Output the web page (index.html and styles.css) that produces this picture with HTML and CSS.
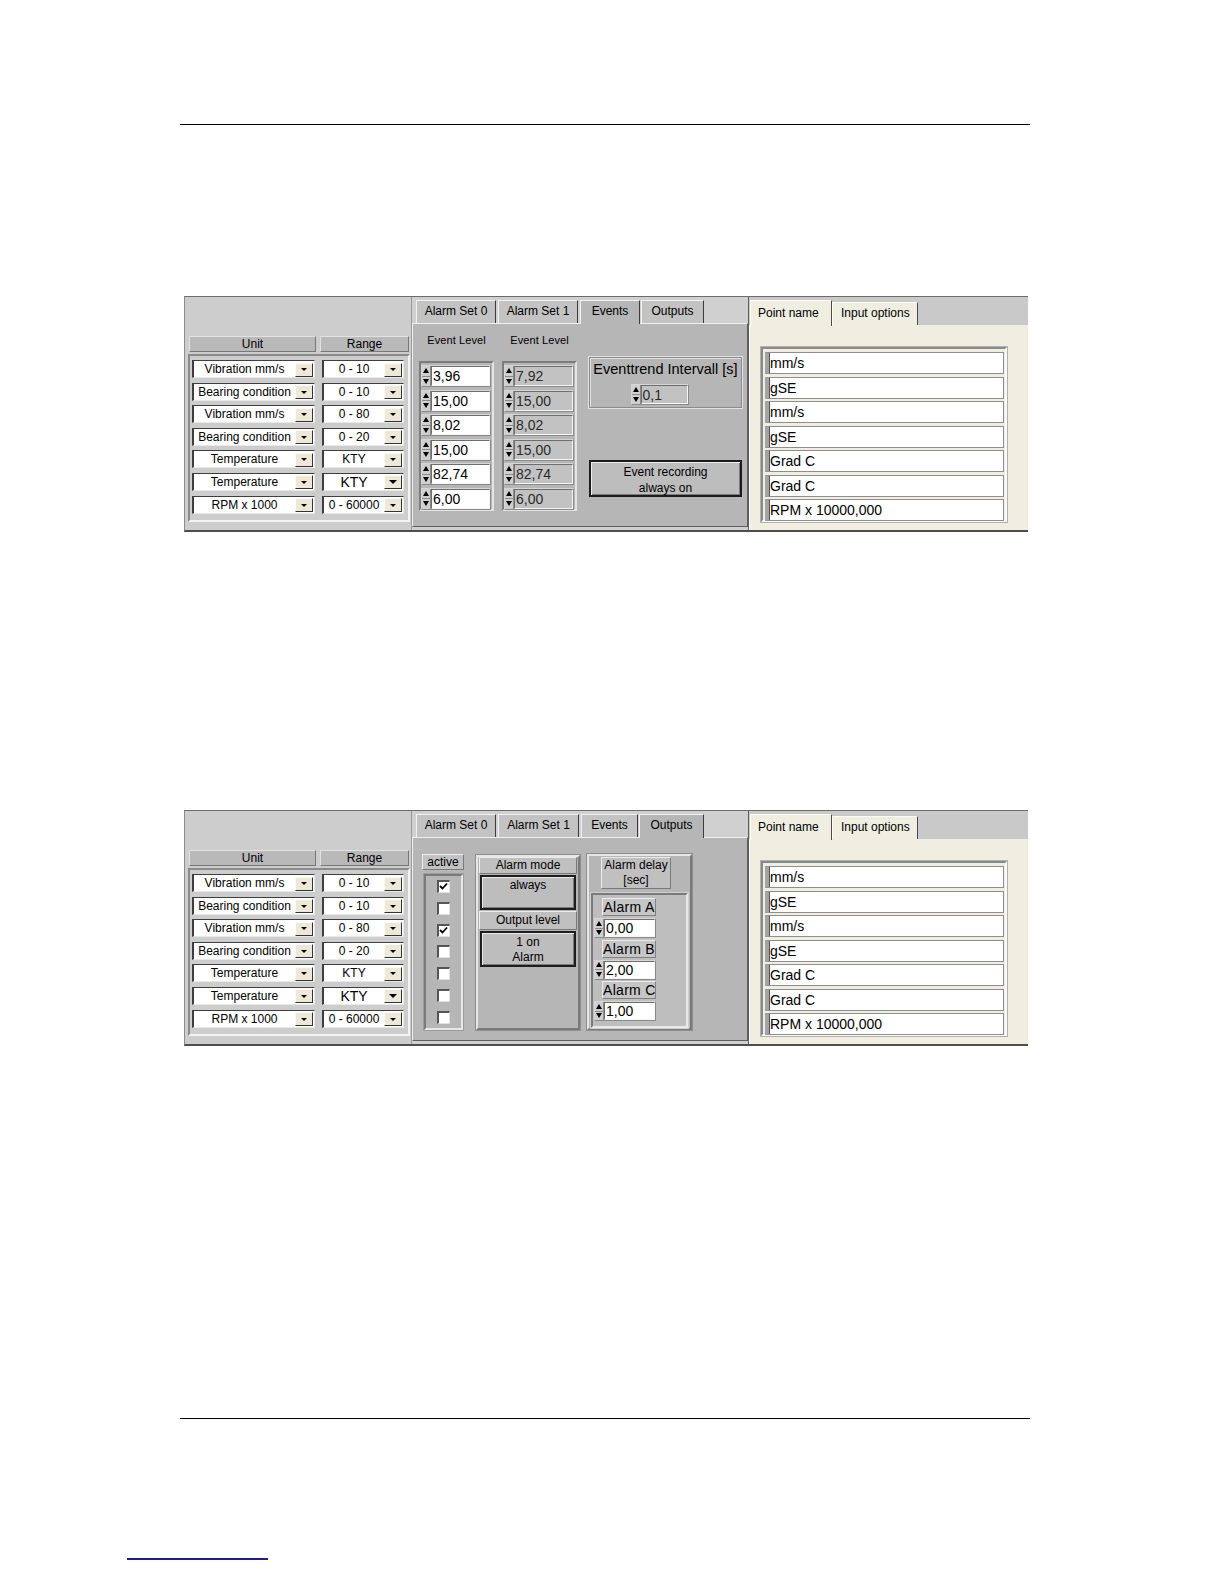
FILE: index.html
```html
<!DOCTYPE html>
<html>
<head>
<meta charset="utf-8">
<link rel="stylesheet" href="styles.css">
</head>
<body>
<div class="page">
  <div class="rule"></div>

  <!-- PANEL 1 : Events -->
  <div class="panel p1">
    <div class="left">
      <div class="hdrs"><div class="hdr unit">Unit</div><div class="hdr range">Range</div></div>
      <div class="grid">
        <div class="row"><div class="dd u"><span class="txt">Vibration mm/s</span><span class="btn"><i></i></span></div><div class="dd r"><span class="txt">0 - 10</span><span class="btn"><i></i></span></div></div>
        <div class="row"><div class="dd u"><span class="txt">Bearing condition</span><span class="btn"><i></i></span></div><div class="dd r"><span class="txt">0 - 10</span><span class="btn"><i></i></span></div></div>
        <div class="row"><div class="dd u"><span class="txt">Vibration mm/s</span><span class="btn"><i></i></span></div><div class="dd r"><span class="txt">0 - 80</span><span class="btn"><i></i></span></div></div>
        <div class="row"><div class="dd u"><span class="txt">Bearing condition</span><span class="btn"><i></i></span></div><div class="dd r"><span class="txt">0 - 20</span><span class="btn"><i></i></span></div></div>
        <div class="row"><div class="dd u"><span class="txt">Temperature</span><span class="btn"><i></i></span></div><div class="dd r"><span class="txt">KTY</span><span class="btn"><i></i></span></div></div>
        <div class="row"><div class="dd u"><span class="txt">Temperature</span><span class="btn"><i></i></span></div><div class="dd r big"><span class="txt">KTY</span><span class="btn"><i></i></span></div></div>
        <div class="row"><div class="dd u"><span class="txt">RPM x 1000</span><span class="btn"><i></i></span></div><div class="dd r"><span class="txt">0 - 60000</span><span class="btn"><i></i></span></div></div>
      </div>
    </div>

    <div class="mid">
      <div class="tabs">
        <div class="tab t1">Alarm Set 0</div>
        <div class="tab t2">Alarm Set 1</div>
        <div class="tab t3 active">Events</div>
        <div class="tab t4">Outputs</div>
      </div>
      <div class="content ev">
        <div class="evcol">
          <div class="evlbl">Event Level</div>
          <div class="spinbox">
            <div class="spin"><span class="sp"><i class="up"></i><i class="dn"></i></span><span class="in">3,96</span></div>
            <div class="spin"><span class="sp"><i class="up"></i><i class="dn"></i></span><span class="in">15,00</span></div>
            <div class="spin"><span class="sp"><i class="up"></i><i class="dn"></i></span><span class="in">8,02</span></div>
            <div class="spin"><span class="sp"><i class="up"></i><i class="dn"></i></span><span class="in">15,00</span></div>
            <div class="spin"><span class="sp"><i class="up"></i><i class="dn"></i></span><span class="in">82,74</span></div>
            <div class="spin"><span class="sp"><i class="up"></i><i class="dn"></i></span><span class="in">6,00</span></div>
          </div>
        </div>
        <div class="evcol">
          <div class="evlbl">Event Level</div>
          <div class="spinbox">
            <div class="spin"><span class="sp"><i class="up"></i><i class="dn"></i></span><span class="in dis">7,92</span></div>
            <div class="spin"><span class="sp"><i class="up"></i><i class="dn"></i></span><span class="in dis">15,00</span></div>
            <div class="spin"><span class="sp"><i class="up"></i><i class="dn"></i></span><span class="in dis">8,02</span></div>
            <div class="spin"><span class="sp"><i class="up"></i><i class="dn"></i></span><span class="in dis">15,00</span></div>
            <div class="spin"><span class="sp"><i class="up"></i><i class="dn"></i></span><span class="in dis">82,74</span></div>
            <div class="spin"><span class="sp"><i class="up"></i><i class="dn"></i></span><span class="in dis">6,00</span></div>
          </div>
        </div>
        <div class="evright">
          <div class="trend">
            <div class="trendlbl">Eventtrend Intervall [s]</div>
            <div class="spin small"><span class="sp"><i class="up"></i><i class="dn"></i></span><span class="in dis">0,1</span></div>
          </div>
          <div class="bigbtn">Event recording<br>always on</div>
        </div>
      </div>
    </div>

    <div class="right">
      <div class="rtabs">
        <div class="rtab active w1">Point name</div>
        <div class="rtab w2">Input options</div>
      </div>
      <div class="rcontent">
        <div class="namebox">
          <div class="name">mm/s</div>
          <div class="name">gSE</div>
          <div class="name">mm/s</div>
          <div class="name">gSE</div>
          <div class="name">Grad C</div>
          <div class="name">Grad C</div>
          <div class="name">RPM x 10000,000</div>
        </div>
      </div>
    </div>
  </div>

  <!-- PANEL 2 : Outputs -->
  <div class="panel p2">
    <div class="left">
      <div class="hdrs"><div class="hdr unit">Unit</div><div class="hdr range">Range</div></div>
      <div class="grid">
        <div class="row"><div class="dd u"><span class="txt">Vibration mm/s</span><span class="btn"><i></i></span></div><div class="dd r"><span class="txt">0 - 10</span><span class="btn"><i></i></span></div></div>
        <div class="row"><div class="dd u"><span class="txt">Bearing condition</span><span class="btn"><i></i></span></div><div class="dd r"><span class="txt">0 - 10</span><span class="btn"><i></i></span></div></div>
        <div class="row"><div class="dd u"><span class="txt">Vibration mm/s</span><span class="btn"><i></i></span></div><div class="dd r"><span class="txt">0 - 80</span><span class="btn"><i></i></span></div></div>
        <div class="row"><div class="dd u"><span class="txt">Bearing condition</span><span class="btn"><i></i></span></div><div class="dd r"><span class="txt">0 - 20</span><span class="btn"><i></i></span></div></div>
        <div class="row"><div class="dd u"><span class="txt">Temperature</span><span class="btn"><i></i></span></div><div class="dd r"><span class="txt">KTY</span><span class="btn"><i></i></span></div></div>
        <div class="row"><div class="dd u"><span class="txt">Temperature</span><span class="btn"><i></i></span></div><div class="dd r big"><span class="txt">KTY</span><span class="btn"><i></i></span></div></div>
        <div class="row"><div class="dd u"><span class="txt">RPM x 1000</span><span class="btn"><i></i></span></div><div class="dd r"><span class="txt">0 - 60000</span><span class="btn"><i></i></span></div></div>
      </div>
    </div>

    <div class="mid">
      <div class="tabs">
        <div class="tab t1">Alarm Set 0</div>
        <div class="tab t2b">Alarm Set 1</div>
        <div class="tab t3b">Events</div>
        <div class="tab t4b active">Outputs</div>
      </div>
      <div class="content out">
        <div class="actcol">
          <div class="acthdr">active</div>
          <div class="actbox">
            <span class="cb"><svg viewBox="0 0 11 11" width="11" height="11"><path d="M2 5 L4.5 7.5 L9 2.5" fill="none" stroke="#000" stroke-width="1.8"/></svg></span>
            <span class="cb"></span>
            <span class="cb"><svg viewBox="0 0 11 11" width="11" height="11"><path d="M2 5 L4.5 7.5 L9 2.5" fill="none" stroke="#000" stroke-width="1.8"/></svg></span>
            <span class="cb"></span>
            <span class="cb"></span>
            <span class="cb"></span>
            <span class="cb"></span>
          </div>
        </div>
        <div class="grp mode">
          <div class="ghdr h1">Alarm mode</div>
          <div class="gbtn b1">always</div>
          <div class="ghdr h2">Output level</div>
          <div class="gbtn b2">1 on<br>Alarm</div>
        </div>
        <div class="grp delay">
          <div class="dhdr">Alarm delay<br>[sec]</div>
          <div class="dbox">
            <div class="ditem"><div class="dlbl">Alarm A</div><div class="spin dspin"><span class="sp"><i class="up"></i><i class="dn"></i></span><span class="in">0,00</span></div></div>
            <div class="ditem"><div class="dlbl">Alarm B</div><div class="spin dspin"><span class="sp"><i class="up"></i><i class="dn"></i></span><span class="in">2,00</span></div></div>
            <div class="ditem"><div class="dlbl">Alarm C</div><div class="spin dspin"><span class="sp"><i class="up"></i><i class="dn"></i></span><span class="in">1,00</span></div></div>
          </div>
        </div>
      </div>
    </div>

    <div class="right">
      <div class="rtabs">
        <div class="rtab active w1b">Point name</div>
        <div class="rtab w2">Input options</div>
      </div>
      <div class="rcontent">
        <div class="namebox">
          <div class="name">mm/s</div>
          <div class="name">gSE</div>
          <div class="name">mm/s</div>
          <div class="name">gSE</div>
          <div class="name">Grad C</div>
          <div class="name">Grad C</div>
          <div class="name">RPM x 10000,000</div>
        </div>
      </div>
    </div>
  </div>

  <div class="rule bottom"></div>
  <div class="footline"></div>
</div>
</body>
</html>
```
FILE: styles.css
```css
* { box-sizing: border-box; }
html, body { margin: 0; padding: 0; width: 1224px; height: 1584px; overflow: hidden; }
body { background: #fff; font-family: "Liberation Sans", Arial, sans-serif; color: #000; }
.page { width: 1224px; height: 1584px; padding-top: 124px; overflow: hidden; }

.rule { margin-left: 180px; width: 850px; height: 0; border-top: 1px solid #000; }
.rule.bottom { margin-top: 372px; }
.footline { margin-top: 139px; margin-left: 127px; width: 141px; border-top: 2px solid #1d1d8c; }

/* ---------- panel ---------- */
.panel {
  margin-left: 184px; width: 844px; height: 236px; display: flex;
  background: #c9c9c9; border-top: 1px solid #6c6c6c; border-left: 1px solid #8c8c8c; border-bottom: 2px solid #4e4e4e;
}
.p1 { margin-top: 171px; }
.p2 { margin-top: 278px; }

/* ---------- left ---------- */
.left { width: 227px; flex: none; background: #cdcdcd; padding: 39px 0 0 4px; border-right: 1px solid #9a9a9a; }
.hdrs { display: flex; gap: 4px; height: 16px; }
.hdr {
  background: #b9b9b9; border: 1px solid; border-color: #e2e2e2 #777 #777 #e2e2e2;
  font-size: 12px; line-height: 14px; text-align: center;
}
.hdr.unit { width: 127px; }
.hdr.range { width: 89px; }
.grid {
  margin: 2px 0 0 -1px; width: 222px; height: 168px;
  border: 2px solid; border-color: #8a8a8a #f2f2f2 #f2f2f2 #8a8a8a;
  padding: 4px 2px; display: flex; flex-direction: column; gap: 4.6px;
}
.row { display: flex; gap: 7px; height: 18px; }
.dd {
  height: 18px; background: #fff; display: flex; align-items: center;
  border: 1px solid; border-left-width: 2px; border-color: #3e3e3e #e8e8e8 #e8e8e8 #3e3e3e;
  font-size: 12px;
}
.dd.u { width: 123px; }
.dd.r { width: 82px; }
.dd .txt { flex: 1; text-align: center; white-space: nowrap; line-height: 14px; }
.dd.big .txt { font-size: 14px; }
.dd .btn {
  width: 18px; height: 14px; margin-right: 1px; margin-top: 1px; background: #ece9d8;
  border: 1px solid; border-color: #fbfbf6 #333 #333 #fbfbf6;
  display: flex; align-items: center; justify-content: center;
}
.dd .btn i { width: 0; height: 0; border-left: 3px solid transparent; border-right: 3px solid transparent; border-top: 3px solid #000; }
.dd.big .btn i { border-left-width: 4px; border-right-width: 4px; border-top-width: 4px; }

/* ---------- middle tabs ---------- */
.mid { width: 336px; flex: none; display: flex; flex-direction: column; background: #d0d0d0; }
.tabs { height: 26px; padding: 3px 0 0 4px; display: flex; align-items: flex-end; gap: 2px; }
.tab {
  height: 23px; font-size: 12px; line-height: 21px; text-align: center;
  background: #c3c3c3; border: 1px solid; border-bottom: none; border-color: #f2f2f2 #3c3c3c transparent #f2f2f2;
}
.tab.active { background: #b6b6b6; height: 24px; margin-bottom: -1px; position: relative; z-index: 1; }
.t1 { width: 80px; } .t2 { width: 80px; } .t3 { width: 60px; } .t4 { width: 63px; margin-left: -1px; }
.t2b { width: 81px; } .t3b { width: 57px; } .t4b { width: 65px; margin-left: -1px; }
.content {
  flex: 1; margin-bottom: 3px; background: #b6b6b6;
  border: 1px solid; border-color: #f0f0f0 #5e5e5e #5e5e5e #f0f0f0;
}

/* events */
.ev { display: flex; padding-left: 6px; }
.evcol { width: 75px; margin-right: 8px; }
.evlbl { height: 37px; padding-top: 10px; font-size: 11px; line-height: 12px; text-align: center; letter-spacing: 0.1px; }
.spinbox {
  height: 150px; border: 2px solid; border-color: #7c7c7c #e4e4e4 #e4e4e4 #7c7c7c;
  padding: 2px 1px 0 0; display: flex; flex-direction: column; gap: 2.5px;
}
.spin { display: flex; height: 22px; border: 1px solid; border-color: #d6d6d6 #8a8a8a #8a8a8a #d6d6d6; }
.sp { width: 9px; display: flex; flex-direction: column; background: #cfcfcf; border-right: 1px solid #8a8a8a; }
.sp i { flex: 1; display: flex; align-items: center; justify-content: center; }
.sp i + i { border-top: 1px solid #8a8a8a; }
.sp .up::before { content: ""; border-left: 3px solid transparent; border-right: 3px solid transparent; border-bottom: 5px solid #000; }
.sp .dn::before { content: ""; border-left: 3px solid transparent; border-right: 3px solid transparent; border-top: 5px solid #000; }
.in {
  flex: 1; background: #fff; border: 1px solid; border-color: #6e6e6e #f6f6f6 #f6f6f6 #6e6e6e;
  font-size: 14px; line-height: 18px; padding-left: 1px; white-space: nowrap;
}
.in.dis { background: #c2c2c2; color: #2a2a2a; }

.evright { width: 153px; margin-left: 4px; }
.trend {
  margin-top: 33px; height: 51px; border: 1px solid #8a8a8a; box-shadow: 0 0 0 1px #e2e2e2, inset 1px 1px 0 #e2e2e2;
  display: flex; flex-direction: column; align-items: center;
}
.trendlbl { font-size: 14.5px; line-height: 18px; margin-top: 2px; white-space: nowrap; }
.spin.small { width: 58px; height: 21px; margin-left: -12px; margin-top: 6px; }
.bigbtn {
  margin-top: 52px; height: 37px; background: #bdbdbd;
  border: 2px solid #1c1c1c; box-shadow: inset 1px 1px 0 #eee, inset -1px -1px 0 #7a7a7a;
  font-size: 12px; line-height: 16px; text-align: center; padding-top: 2px;
}

/* outputs */
.out { display: flex; align-items: flex-start; }
.actcol { margin-left: 9px; margin-top: 16px; width: 42px; }
.acthdr {
  height: 16px; background: #c2c2c2; border: 1px solid; border-color: #ececec #7a7a7a #7a7a7a #ececec;
  font-size: 12px; line-height: 14px; text-align: center;
}
.actbox {
  margin: 4px 0 0 2px; width: 39px; height: 156px;
  border: 2px solid; border-color: #7a7a7a #e8e8e8 #e8e8e8 #7a7a7a; box-shadow: 0 0 0 1px #9c9c9c;
  display: flex; flex-direction: column; align-items: center; padding-top: 4px; gap: 8.8px;
}
.cb {
  width: 13px; height: 13px; background: #fff; flex: none;
  border: 1px solid; border-color: #555 #e0e0e0 #e0e0e0 #555; border-left-width: 2px; border-top-width: 2px;
  display: flex; align-items: center; justify-content: center;
}
.cb svg { display: block; margin: -1px 0 0 -1px; }

.grp { border: 2px solid; border-color: #e6e6e6 #7a7a7a #7a7a7a #e6e6e6; box-shadow: 0 0 0 1px #8e8e8e; }
.mode { margin-left: 12px; margin-top: 17px; width: 104px; height: 175px; padding: 0 1px; display: flex; flex-direction: column; align-items: stretch; }
.ghdr {
  background: #c0c0c0; border: 1px solid; border-color: #ececec #7a7a7a #7a7a7a #ececec;
  font-size: 12px; text-align: center;
}
.h1 { height: 17px; line-height: 15px; }
.h2 { height: 19px; line-height: 17px; margin-top: 1px; }
.gbtn {
  margin: 1px 1px 0; background: #bdbdbd; border: 2px solid #1e1e1e;
  box-shadow: inset 1px 1px 0 #eaeaea, inset -1px -1px 0 #7a7a7a;
  font-size: 12px; line-height: 15px; text-align: center;
}
.b1 { height: 35px; padding-top: 1px; }
.b2 { height: 36px; padding-top: 2px; }

.delay { margin-left: 7px; margin-top: 16px; width: 105px; height: 176px; display: flex; flex-direction: column; align-items: center; }
.dhdr {
  width: 70px; height: 32px; margin-top: 1px; margin-left: -7px; background: #c0c0c0;
  border: 1px solid; border-color: #ececec #7a7a7a #7a7a7a #ececec;
  font-size: 12px; line-height: 15px; text-align: center;
}
.dbox {
  margin-top: 4px; width: 97px; height: 135px; background: #bebebe;
  border: 2px solid; border-color: #7a7a7a #e8e8e8 #e8e8e8 #7a7a7a; box-shadow: 0 0 0 1px #d0d0d0;
  padding: 3px 0 0 1px;
}
.ditem { width: 62px; height: 41.5px; }
.dlbl {
  margin-left: 8px; width: 54px; height: 18px; background: #c6c6c6;
  border: 1px solid; border-color: #ececec #808080 #808080 #ececec;
  font-size: 14px; line-height: 16px; text-align: center; letter-spacing: 0.3px; white-space: nowrap;
}
.spin.dspin { width: 62px; height: 20px; margin-top: 2px; }
.dspin .sp { width: 9px; }
.dspin .in { line-height: 16px; }

/* ---------- right ---------- */
.right { width: 280px; flex: none; display: flex; flex-direction: column; background: #c9c9c9; border-left: 1px solid #5e5e5e; }
.rtabs { height: 28px; padding: 3px 0 0 1px; display: flex; align-items: flex-end; }
.rtab {
  height: 23px; background: #efeee1; border: 1px solid; border-bottom: none; border-color: #fdfdf8 #4a4a4a transparent #fdfdf8;
  font-size: 12px; line-height: 21px; padding-left: 7px; white-space: nowrap;
}
.rtab.active { height: 26px; line-height: 25px; margin-bottom: -1px; position: relative; z-index: 1; }
.w1 { width: 82px; } .w1b { width: 82px; } .w2 { width: 86px; padding-left: 8px; }
.rcontent { flex: 1; background: #efeee1; border-left: 1px solid #fff; padding: 22px 0 0 11px; }
.namebox {
  width: 246px; height: 175px; border: 2px solid; border-color: #8a8a8a #fafafa #fafafa #8a8a8a;
  box-shadow: 0 0 0 1px #b0b0b0; padding: 3px 1px 3px 2px;
  display: flex; flex-direction: column; gap: 2.5px;
}
.name {
  height: 22px; background: #fff; border: 1px solid #8e8e8e; border-left: 4px solid #a4a4a4;
  box-shadow: inset 1px 0 0 #555; font-size: 14px; line-height: 20px; padding-left: 1px; white-space: nowrap;
}
```
